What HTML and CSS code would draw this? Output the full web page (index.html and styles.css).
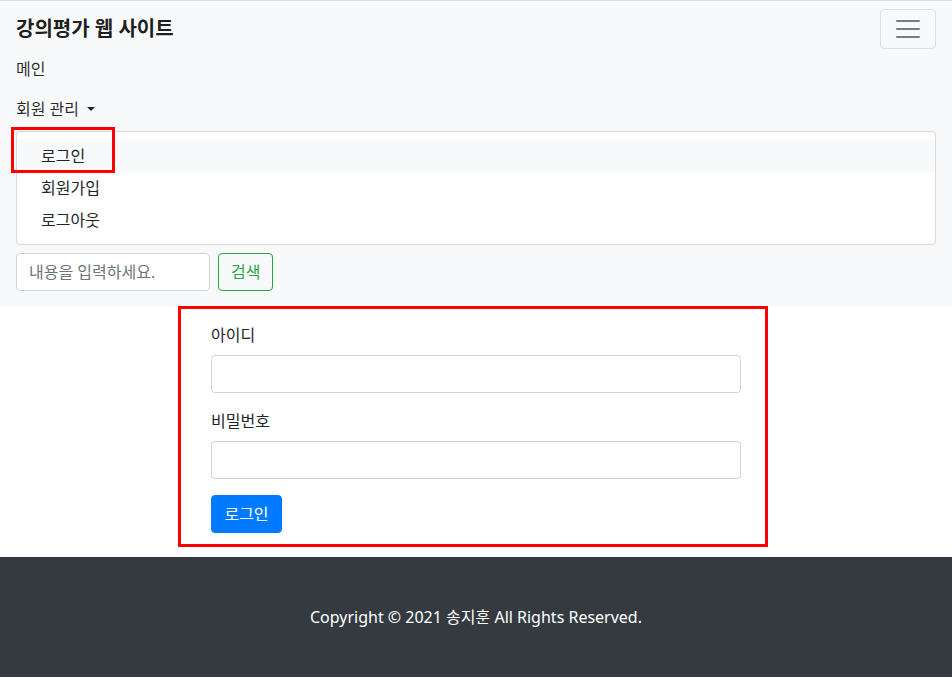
FILE: index.html
```html
<!DOCTYPE html>
<html lang="ko">
<head>
<meta charset="utf-8">
<title>강의평가 웹 사이트</title>
<link rel="stylesheet" href="styles.css">
</head>
<body>
<nav class="navbar">
  <div class="navbar-top">
    <a class="brand" href="#">강의평가 웹 사이트</a>
    <button class="toggler" type="button" aria-label="메뉴">
      <svg width="30" height="30" viewBox="0 0 30 30"><path d="M4 7h22M4 15h22M4 23h22" stroke="rgba(0,0,0,.5)" stroke-width="2" stroke-linecap="round" stroke-miterlimit="10"/></svg>
    </button>
  </div>
  <ul class="nav">
    <li><a class="nav-link" href="#">메인</a></li>
    <li><a class="nav-link dropdown-toggle" href="#">회원 관리</a>
      <div class="dropdown-menu">
        <a class="dropdown-item hover" href="#">로그인<span class="mark"></span></a>
        <a class="dropdown-item" href="#">회원가입</a>
        <a class="dropdown-item" href="#">로그아웃</a>
      </div>
    </li>
  </ul>
  <form class="search">
    <input class="form-control search-input" type="search" placeholder="내용을 입력하세요.">
    <button class="btn btn-outline-success" type="submit">검색</button>
  </form>
</nav>
<section class="login-box">
  <form class="login-form">
    <div class="form-group">
      <label>아이디</label>
      <input class="form-control" type="text">
    </div>
    <div class="form-group">
      <label>비밀번호</label>
      <input class="form-control" type="password">
    </div>
    <button class="btn btn-primary" type="submit">로그인</button>
  </form>
</section>
<footer class="footer">Copyright &copy; 2021 송지훈 All Rights Reserved.</footer>
</body>
</html>
```
FILE: styles.css
```css
* { box-sizing: border-box; }
html, body { margin: 0; padding: 0; }
body {
  font-family: "Noto Sans", "Noto Sans CJK KR", sans-serif;
  font-size: 16px;
  line-height: 1.5;
  color: #212529;
  background: #fff;
  border-top: 1px solid #dee2e6;
}
a { text-decoration: none; }

.navbar {
  background: #f8f9fa;
  padding: 8px 16px;
}
.navbar-top {
  display: flex;
  justify-content: space-between;
  align-items: center;
}
.brand {
  font-size: 20px;
  font-weight: 700;
  line-height: 30px;
  padding: 5px 0;
  color: rgba(0,0,0,.9);
}
.toggler {
  width: 56px;
  height: 40px;
  padding: 4px 12px;
  background: transparent;
  border: 1px solid rgba(0,0,0,.1);
  border-radius: 4px;
  display: flex;
  align-items: center;
  justify-content: center;
}
.toggler svg { display: block; }

.nav { list-style: none; margin: 0; padding: 0; }
.nav-link {
  display: block;
  padding: 8px 0;
  color: rgba(0,0,0,.85);
}
.dropdown-toggle::after {
  content: "";
  display: inline-block;
  margin-left: 8px;
  vertical-align: 0.255em;
  border-top: 0.3em solid;
  border-right: 0.3em solid transparent;
  border-left: 0.3em solid transparent;
  border-bottom: 0;
}
.dropdown-menu {
  margin-top: 2px;
  padding: 8px 0;
  background: #fff;
  border: 1px solid rgba(0,0,0,.15);
  border-radius: 4px;
}
.dropdown-item {
  display: block;
  position: relative;
  padding: 4px 24px;
  color: #212529;
}
.dropdown-item.hover { background: #f8f9fa; }
.mark {
  position: absolute;
  left: -6px;
  top: -13px;
  width: 104px;
  height: 46px;
  border: 3px solid #f00;
  pointer-events: none;
}

.search {
  display: flex;
  margin: 8px 0;
}
.form-control {
  display: block;
  height: 38px;
  padding: 6px 12px;
  font: inherit;
  color: #495057;
  background: #fff;
  border: 1px solid #ced4da;
  border-radius: 4px;
}
.form-control::placeholder { color: #6c757d; }
.search-input { width: 194px; margin-right: 8px; }
.btn {
  font: inherit;
  height: 38px;
  padding: 6px 12px;
  border-radius: 4px;
  border: 1px solid transparent;
}
.btn-outline-success {
  color: #28a745;
  background: transparent;
  border-color: #28a745;
}
.btn-primary {
  color: #fff;
  background: #007bff;
  border-color: #007bff;
  width: 71px;
}

.login-box {
  width: 590px;
  margin: -1px 0 10px calc(50% - 298px);
  border: 3px solid #f00;
  padding: 14px 24px 11px 30px;
}
.login-form { width: 530px; }
.form-group { margin-bottom: 16px; }
.form-group label {
  display: inline-block;
  margin-bottom: 8px;
}
.form-group .form-control { width: 100%; }

.footer {
  background: #343a40;
  color: #fff;
  text-align: center;
  padding: 48px 0;
  line-height: 24px;
}
```
